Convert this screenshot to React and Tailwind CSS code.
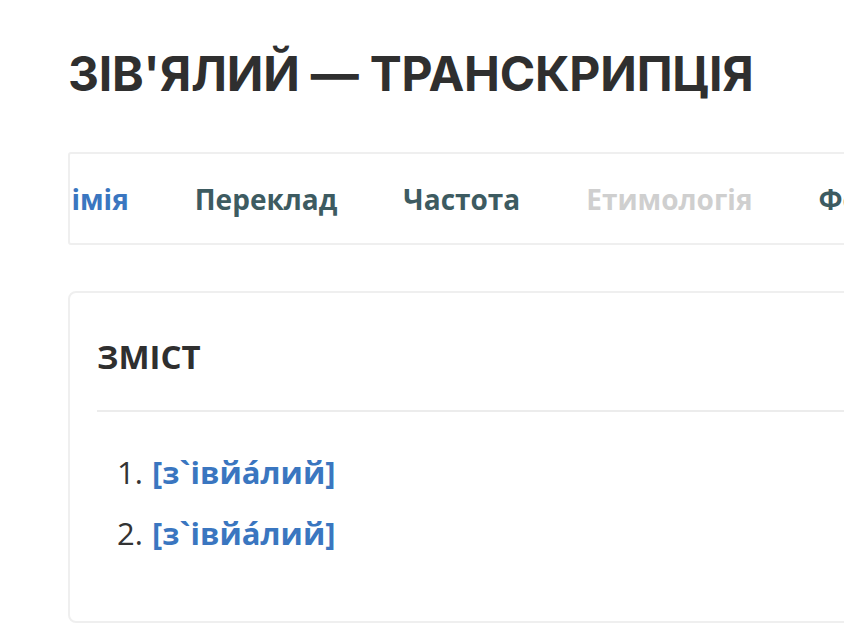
import React from 'react';

const tabs = [
    { label: 'Синонімія', tone: 'text-[#3a76c0]' },
    { label: 'Переклад', tone: 'text-[#3d5b61]' },
    { label: 'Частота', tone: 'text-[#3d5b61]' },
    { label: 'Етимологія', tone: 'text-[#cfcfcf]' },
    { label: 'Фонетика', tone: 'text-[#3d5b61]' },
];

const entries = ['[з`івйа́лий]', '[з`івйа́лий]'];

const App = () => {
    return (
        <div className="min-h-[633px] w-[844px] overflow-hidden bg-white" style={{ fontFamily: '"Open Sans", "Noto Sans", sans-serif' }}>
            <div className="pl-[68px] pt-[48px]">
                <h1
                    className="text-[48px] font-bold leading-[52px] tracking-[-0.2px] text-[#2f2f2f] whitespace-nowrap"
                    style={{ fontFamily: 'Inter, "Noto Sans", sans-serif' }}
                >
                    ЗІВ'ЯЛИЙ — ТРАНСКРИПЦІЯ
                </h1>

                {/* Scrolled tab strip */}
                <div className="mt-[52px] h-[93px] w-[900px] overflow-hidden rounded-[3px] border-2 border-[#efefef]">
                    <div className="-ml-[91px] flex h-full items-center gap-[66px] whitespace-nowrap">
                        {tabs.map((tab) => (
                            <span key={tab.label} className={`text-[28px] font-bold ${tab.tone}`}>
                                {tab.label}
                            </span>
                        ))}
                    </div>
                </div>

                {/* Contents card */}
                <div className="mt-[46px] w-[900px] rounded-[8px] border-2 border-[#efefef] pl-[27px] pb-[65px]">
                    <h2 className="pt-[42px] pb-[31px] text-[33px] font-bold leading-[44px] text-[#2f2f2f]">ЗМІСТ</h2>
                    <div className="h-[2px] bg-[#ececec]" />
                    <ol className="mt-[38px] space-y-[16px] pl-[20px]">
                        {entries.map((e, i) => (
                            <li key={i} className="flex text-[31px] leading-[45px]">
                                <span className="mr-[9px] text-[#333]">{i + 1}.</span>
                                <a className="font-bold text-[#3a76c0]">{e}</a>
                            </li>
                        ))}
                    </ol>
                </div>
            </div>
        </div>
    );
};

export default App;
